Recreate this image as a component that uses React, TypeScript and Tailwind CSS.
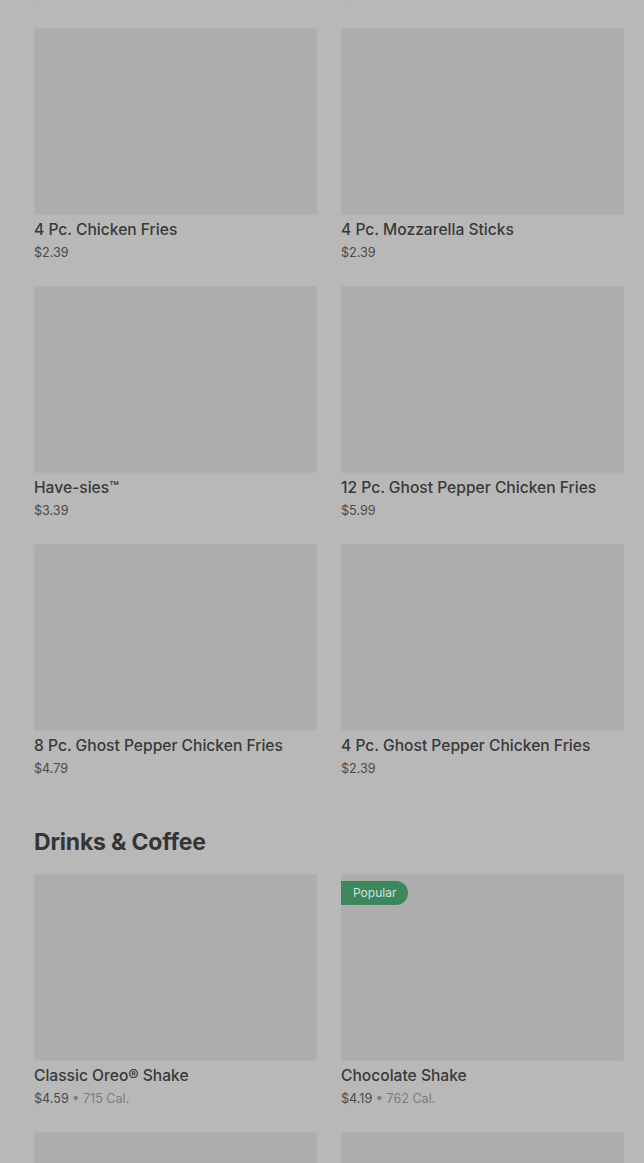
import React from "react";

type Item = { name: string; price: string; cal?: string; popular?: boolean };

const topRow: Item[] = [
  { name: "Chicken Fries", price: "$3.39" },
  { name: "Fries", price: "$2.39" },
];

const sides: Item[] = [
  { name: "4 Pc. Chicken Fries", price: "$2.39" },
  { name: "4 Pc. Mozzarella Sticks", price: "$2.39" },
  { name: "Have-sies™", price: "$3.39" },
  { name: "12 Pc. Ghost Pepper Chicken Fries", price: "$5.99" },
  { name: "8 Pc. Ghost Pepper Chicken Fries", price: "$4.79" },
  { name: "4 Pc. Ghost Pepper Chicken Fries", price: "$2.39" },
];

const drinks: Item[] = [
  { name: "Classic Oreo® Shake", price: "$4.59", cal: "715 Cal." },
  { name: "Chocolate Shake", price: "$4.19", cal: "762 Cal.", popular: true },
  { name: "Vanilla Shake", price: "$4.19", cal: "590 Cal." },
  { name: "Strawberry Shake", price: "$4.19", cal: "620 Cal." },
];

function Card({ item }: { item: Item }) {
  return (
    <div className="flex flex-col">
      <div className="relative h-[187px] bg-[#adadad] border border-[#b1b1b1]">
        {item.popular && (
          <div className="absolute left-[-1px] top-[6px] h-[24px] px-[12px] flex items-center rounded-r-full bg-[#3c875c] text-[12px] text-[#d5e3da] leading-none">
            Popular
          </div>
        )}
      </div>
      <div className="mt-[5px] text-[15.6px] leading-[20px] font-medium text-[#393939] whitespace-nowrap">
        {item.name}
      </div>
      <div className="mt-[4px] text-[12.6px] leading-[18px] text-[#4a4a4a]">
        {item.price}
        {item.cal && (
          <span className="text-[#7c7c7c]">
            {" "}• {item.cal}
          </span>
        )}
      </div>
    </div>
  );
}

export default function App() {
  return (
    <div
      className="w-[644px] h-[1163px] overflow-hidden bg-[#b8b8b8]"
      style={{ fontFamily: "Inter, 'Noto Sans', sans-serif" }}
    >
      <div className="pl-[34px] pr-[20px]">
        <div className="mt-[-230px] grid grid-cols-2 gap-x-[24px] gap-y-[24px]">
          {topRow.concat(sides).map((it, i) => (
            <Card key={i} item={it} />
          ))}
        </div>
        <h2 className="mt-[50px] mb-[18px] text-[23px] leading-[28px] font-bold tracking-[-0.2px] text-[#353535]">
          Drinks &amp; Coffee
        </h2>
        <div className="grid grid-cols-2 gap-x-[24px] gap-y-[24px]">
          {drinks.map((it, i) => (
            <Card key={i} item={it} />
          ))}
        </div>
      </div>
    </div>
  );
}
